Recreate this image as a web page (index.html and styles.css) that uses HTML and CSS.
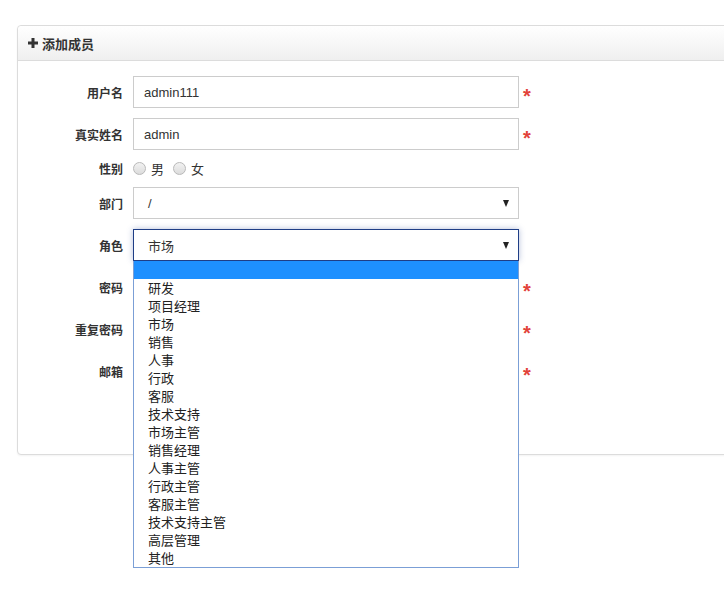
FILE: index.html
```html
<!DOCTYPE html>
<html lang="zh">
<head>
<meta charset="utf-8">
<title>添加成员</title>
<link rel="stylesheet" href="styles.css">
</head>
<body>
<div class="page">
  <div class="panel">
    <div class="panel-head">
      <svg class="plus" width="10" height="10" viewBox="0 0 10 10"><path d="M3.5 0h3v3.5H10v3H6.5V10h-3V6.5H0v-3h3.5z" fill="#333"/></svg>
      <span>添加成员</span>
    </div>
    <div class="panel-body">
      <div class="row">
        <label class="lbl">用户名</label>
        <div class="ctl input">admin111</div>
        <span class="req">*</span>
      </div>
      <div class="row">
        <label class="lbl">真实姓名</label>
        <div class="ctl input">admin</div>
        <span class="req">*</span>
      </div>
      <div class="row row-radio">
        <label class="lbl">性别</label>
        <div class="radios">
          <span class="radio"></span><span class="rtxt">男</span>
          <span class="radio"></span><span class="rtxt">女</span>
        </div>
      </div>
      <div class="row">
        <label class="lbl">部门</label>
        <div class="ctl select"><span>/</span><span class="arrow"></span></div>
      </div>
      <div class="row">
        <label class="lbl">角色</label>
        <div class="select-wrap">
          <div class="ctl select focus"><span>市场</span><span class="arrow"></span></div>
          <ul class="dropdown">
            <li class="sel">&nbsp;</li>
            <li>研发</li>
            <li>项目经理</li>
            <li>市场</li>
            <li>销售</li>
            <li>人事</li>
            <li>行政</li>
            <li>客服</li>
            <li>技术支持</li>
            <li>市场主管</li>
            <li>销售经理</li>
            <li>人事主管</li>
            <li>行政主管</li>
            <li>客服主管</li>
            <li>技术支持主管</li>
            <li>高层管理</li>
            <li>其他</li>
          </ul>
        </div>
      </div>
      <div class="row">
        <label class="lbl">密码</label>
        <div class="ctl input"></div>
        <span class="req">*</span>
      </div>
      <div class="row">
        <label class="lbl">重复密码</label>
        <div class="ctl input"></div>
        <span class="req">*</span>
      </div>
      <div class="row">
        <label class="lbl">邮箱</label>
        <div class="ctl input"></div>
        <span class="req">*</span>
      </div>
    </div>
  </div>
</div>
</body>
</html>
```

FILE: styles.css
```css
html {
  height: 100%;
  overflow: hidden;
}
body {
  margin: 0;
  padding: 0;
  min-height: 100%;
  background: #fff;
  font-family: "Liberation Sans", "Noto Sans CJK SC", sans-serif;
  font-size: 13px;
  color: #333;
}
.page {
  padding: 25px 0 0 17px;
  min-height: 596px;
  box-sizing: border-box;
}
.panel {
  width: 730px;
  border: 1px solid #dcdcdc;
  border-radius: 4px;
  box-shadow: 0 1px 2px rgba(0,0,0,0.05);
  background: #fff;
}
.panel-head {
  height: 34px;
  display: flex;
  align-items: center;
  padding: 0 10px;
  background: linear-gradient(#ffffff, #efefef);
  border-bottom: 1px solid #dcdcdc;
  border-radius: 4px 4px 0 0;
  font-weight: bold;
  font-size: 13px;
  color: #333;
}
.plus {
  margin: 0 4px 0 0;
}
.panel-body {
  padding: 15px 0 67px 0;
}
.row {
  display: flex;
  align-items: center;
  margin-bottom: 10px;
}
.row:last-child {
  margin-bottom: 0;
}
.lbl {
  width: 105px;
  text-align: right;
  margin-right: 10px;
  font-weight: bold;
  font-size: 12px;
  color: #333;
}
.ctl {
  width: 386px;
  height: 32px;
  box-sizing: border-box;
  border: 1px solid #cccccc;
  background: #fff;
  display: flex;
  align-items: center;
  color: #333;
  font-size: 13px;
}
.input {
  padding-left: 10px;
}
.select {
  padding: 0 9px 0 14px;
  justify-content: space-between;
}
.select.focus {
  border-color: #1f3e86;
  box-shadow: 0 0 6px rgba(40, 70, 150, 0.35);
}
.arrow {
  width: 0;
  height: 0;
  border-left: 3.5px solid transparent;
  border-right: 3.5px solid transparent;
  border-top: 7px solid #222;
  margin-top: 1px;
}
.req {
  color: #e2433a;
  font-size: 20px;
  font-weight: bold;
  line-height: 1;
  margin-left: 4px;
  margin-top: 7px;
  font-family: "Liberation Sans", sans-serif;
}
.row-radio {
  height: 17px;
}
.radios {
  display: flex;
  align-items: center;
}
.radio {
  width: 11px;
  height: 11px;
  border-radius: 50%;
  border: 1px solid #b9b9b9;
  background: linear-gradient(#f2f2f2, #dcdcdc);
  margin-right: 5px;
}
.rtxt {
  margin-right: 9px;
}
.select-wrap {
  position: relative;
}
.dropdown {
  position: absolute;
  top: 32px;
  left: 0;
  width: 386px;
  box-sizing: border-box;
  margin: 0;
  padding: 0;
  list-style: none;
  border: 1px solid #7b9fd6;
  border-top: none;
  background: #fff;
  z-index: 5;
}
.dropdown li {
  height: 18px;
  line-height: 18px;
  padding-left: 14px;
  font-size: 13px;
  color: #222;
  font-family: "Noto Sans CJK SC", sans-serif;
}
.dropdown li.sel {
  background: #1e90ff;
}
```
